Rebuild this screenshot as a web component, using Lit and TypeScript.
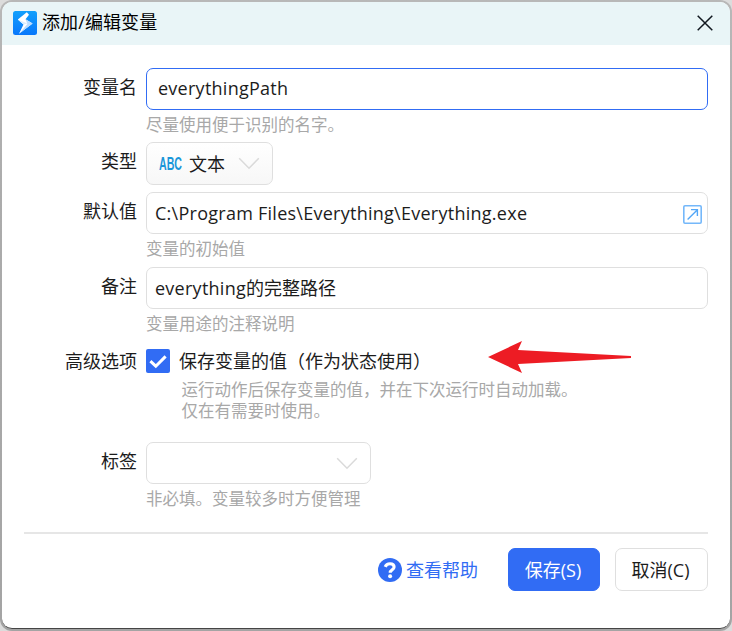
import { LitElement, html, css, nothing } from "lit";
import { customElement, property } from "lit/decorators.js";

const chevron = html`<svg class="chevron" width="22" height="13" viewBox="0 0 22 13">
  <path d="M1.2 1.2 11 11.2 20.8 1.2" fill="none" stroke="#dadada" stroke-width="1.5" />
</svg>`;

@customElement("form-row")
export class FormRow extends LitElement {
  @property() label = "";
  @property() hint = "";

  static styles = css`
    :host {
      display: grid;
      grid-template-columns: 135px 562px;
      column-gap: 9px;
      align-items: start;
    }
    .label {
      text-align: right;
      line-height: 38px;
      white-space: nowrap;
    }
    .hint {
      font-size: 16.5px;
      line-height: 22px;
      height: 22px;
      margin-top: 4px;
      color: #a8a8a8;
      white-space: nowrap;
    }
  `;

  render() {
    return html`
      <div class="label">${this.label}</div>
      <div>
        <slot></slot>
        ${this.hint ? html`<div class="hint">${this.hint}</div>` : nothing}
      </div>
    `;
  }
}

@customElement("app-root")
export class AppRoot extends LitElement {
  static styles = css`
    :host {
      display: block;
      width: 732px;
      height: 631px;
      overflow: hidden;
      background: #dcdcdc;
      font-family: "Open Sans", "Noto Sans CJK SC", sans-serif;
      font-size: 18px;
      color: #1c1c1c;
    }
    * {
      box-sizing: border-box;
    }
    svg {
      display: block;
      flex: none;
    }
    .frame {
      height: 631px;
      padding: 2px;
      border-radius: 12px;
      background: linear-gradient(#b8b8b8, #acacac 30%, #a4a4a4);
    }
    .window {
      height: 627px;
      border-radius: 10px;
      border-bottom: 1px solid #454545;
      background: #fff;
      overflow: hidden;
      display: flex;
      flex-direction: column;
    }
    .titlebar {
      height: 43px;
      flex: none;
      display: flex;
      align-items: center;
      padding: 0 17px 2px 11px;
      background: #e9f5f7;
      color: #000;
    }
    .title {
      margin-left: 5px;
      padding-bottom: 2px;
      flex: 1;
      line-height: 24px;
      letter-spacing: 0.1px;
    }
    .form {
      padding-top: 23px;
      display: grid;
      grid-template-rows: 74px 50px 75px 75px 100px 90px;
    }
    .field {
      display: flex;
      align-items: center;
      height: 42px;
      padding: 0 5px 0 8px;
      border: 1px solid #dfdfdf;
      border-radius: 7px;
      background: #fff;
      white-space: nowrap;
    }
    .field.focused {
      border-color: #316cf4;
      padding-left: 11px;
    }
    .field.type {
      width: 127px;
      height: 43px;
      padding: 0 12px 0 12px;
      background: linear-gradient(#fff, #f7f7f7);
    }
    .field.tag {
      width: 225px;
      padding-right: 12px;
    }
    .chevron {
      margin-left: auto;
    }
    .abc {
      width: 30px;
      font: 700 18px/20px "Liberation Sans", sans-serif;
      color: #1a96d9;
      transform: scaleX(0.59);
      transform-origin: 0 50%;
      flex: none;
    }
    .raised {
      padding-bottom: 2px;
    }
    .latin {
      letter-spacing: 0.26px;
    }
    .grow {
      flex: 1;
    }
    .launch {
      margin-top: 2px;
    }
    .option {
      display: flex;
      align-items: center;
      height: 38px;
      gap: 9px;
      white-space: nowrap;
    }
    .description {
      margin: -1px 0 0 35.5px;
      font-size: 16.5px;
      line-height: 21px;
      color: #a8a8a8;
      white-space: nowrap;
    }
    .footer {
      margin: 0 22px;
      padding-top: 14px;
      border-top: 2px solid #e6e6e6;
      display: flex;
      justify-content: flex-end;
      align-items: center;
    }
    .help {
      display: flex;
      align-items: center;
      gap: 4px;
      margin-right: 30px;
      color: #316cf4;
    }
    .button {
      width: 93px;
      height: 43px;
      padding: 0 2px 2px 0;
      border: 1px solid #dfdfdf;
      border-radius: 7px;
      display: flex;
      align-items: center;
      justify-content: center;
      white-space: nowrap;
    }
    .primary {
      width: 92px;
      margin-right: 15px;
      border-color: #316cf4;
      background: #316cf4;
      color: #fff;
    }
    .arrow {
      position: absolute;
      left: 487px;
      top: 340px;
    }
  `;

  render() {
    return html`
      <div class="frame">
        <div class="window">
          <header class="titlebar">
            <svg width="24" height="24" viewBox="0 0 24 24">
              <defs>
                <linearGradient id="tile" x1="0" y1="0" x2="0" y2="1">
                  <stop offset="0" stop-color="#12a0fc" />
                  <stop offset="1" stop-color="#0877fb" />
                </linearGradient>
              </defs>
              <rect width="24" height="24" rx="2.5" fill="url(#tile)" />
              <path d="M13.8 1.2 4.8 8.5 10.5 13.5 6 22.8 19.6 12.4 12.5 8.2 16 3.8Z" fill="#fff" />
              <path d="M12.5 8.2 19.6 12.4 6 22.8 14.4 13Z" fill="#b9dcff" />
              <path d="M4.8 8.5 10.5 13.5 14.5 12.5Z" fill="#d9edff" />
            </svg>
            <div class="title">添加/编辑变量</div>
            <svg width="16" height="16" viewBox="0 0 16 16">
              <path d="M.7.7 15.3 15.3M15.3.7.7 15.3" stroke="#111820" stroke-width="1.5" />
            </svg>
          </header>

          <div class="form">
            <form-row label="变量名" hint="尽量使用便于识别的名字。">
              <div class="field focused"><span class="latin raised">everythingPath</span></div>
            </form-row>
            <form-row label="类型">
              <div class="field type">
                <span class="abc">ABC</span><span class="raised">文本</span>${chevron}
              </div>
            </form-row>
            <form-row label="默认值" hint="变量的初始值">
              <div class="field">
                <span class="grow latin">C:\\Program Files\\Everything\\Everything.exe</span>
                <svg class="launch" width="19" height="19" viewBox="0 0 19 19" fill="none" stroke="#75b8fa">
                  <rect x=".8" y=".8" width="17.4" height="17.4" rx="1.2" stroke-width="1.6" />
                  <path d="M4.6 14.5 14.2 4.9M8 4.6H14.4V11" stroke="#55a8f7" stroke-width="1.4" />
                </svg>
              </div>
            </form-row>
            <form-row label="备注" hint="变量用途的注释说明">
              <div class="field">
                <span class="raised"><span class="latin">everything</span>的完整路径</span>
              </div>
            </form-row>
            <form-row label="高级选项">
              <div class="option">
                <svg width="24" height="24" viewBox="0 0 24 24">
                  <rect width="24" height="24" rx="2" fill="#316cf4" />
                  <path d="M4.4 12.2 9.8 17.2 19.6 7.4" fill="none" stroke="#fff" stroke-width="3" />
                </svg>
                <span class="raised">保存变量的值（作为状态使用）</span>
              </div>
              <div class="description">
                运行动作后保存变量的值，并在下次运行时自动加载。<br />仅在有需要时使用。
              </div>
            </form-row>
            <form-row label="标签" hint="非必填。变量较多时方便管理">
              <div class="field tag">${chevron}</div>
            </form-row>
          </div>

          <footer class="footer">
            <div class="help">
              <svg width="24" height="24" viewBox="0 0 24 24">
                <circle cx="12" cy="12" r="12" fill="#316cf4" />
                <path d="M7.2 8.9C8 6.8 9.7 5.7 12 5.7C14.6 5.7 16.1 7.1 16.1 9.1C16.1 11.9 12.2 11.8 12.2 14.8" fill="none" stroke="#fff" stroke-width="3.1" />
                <circle cx="12.1" cy="18.2" r="2" fill="#fff" />
              </svg>
              <span class="raised">查看帮助</span>
            </div>
            <div class="button primary">保存(S)</div>
            <div class="button">取消(C)</div>
          </footer>
        </div>
      </div>
      <svg class="arrow" width="146" height="34" viewBox="0 0 146 34">
        <path d="M1 17 35 1 31 10 144 16V18L31 24 35 33Z" fill="#ed1c24" />
      </svg>
    `;
  }
}
